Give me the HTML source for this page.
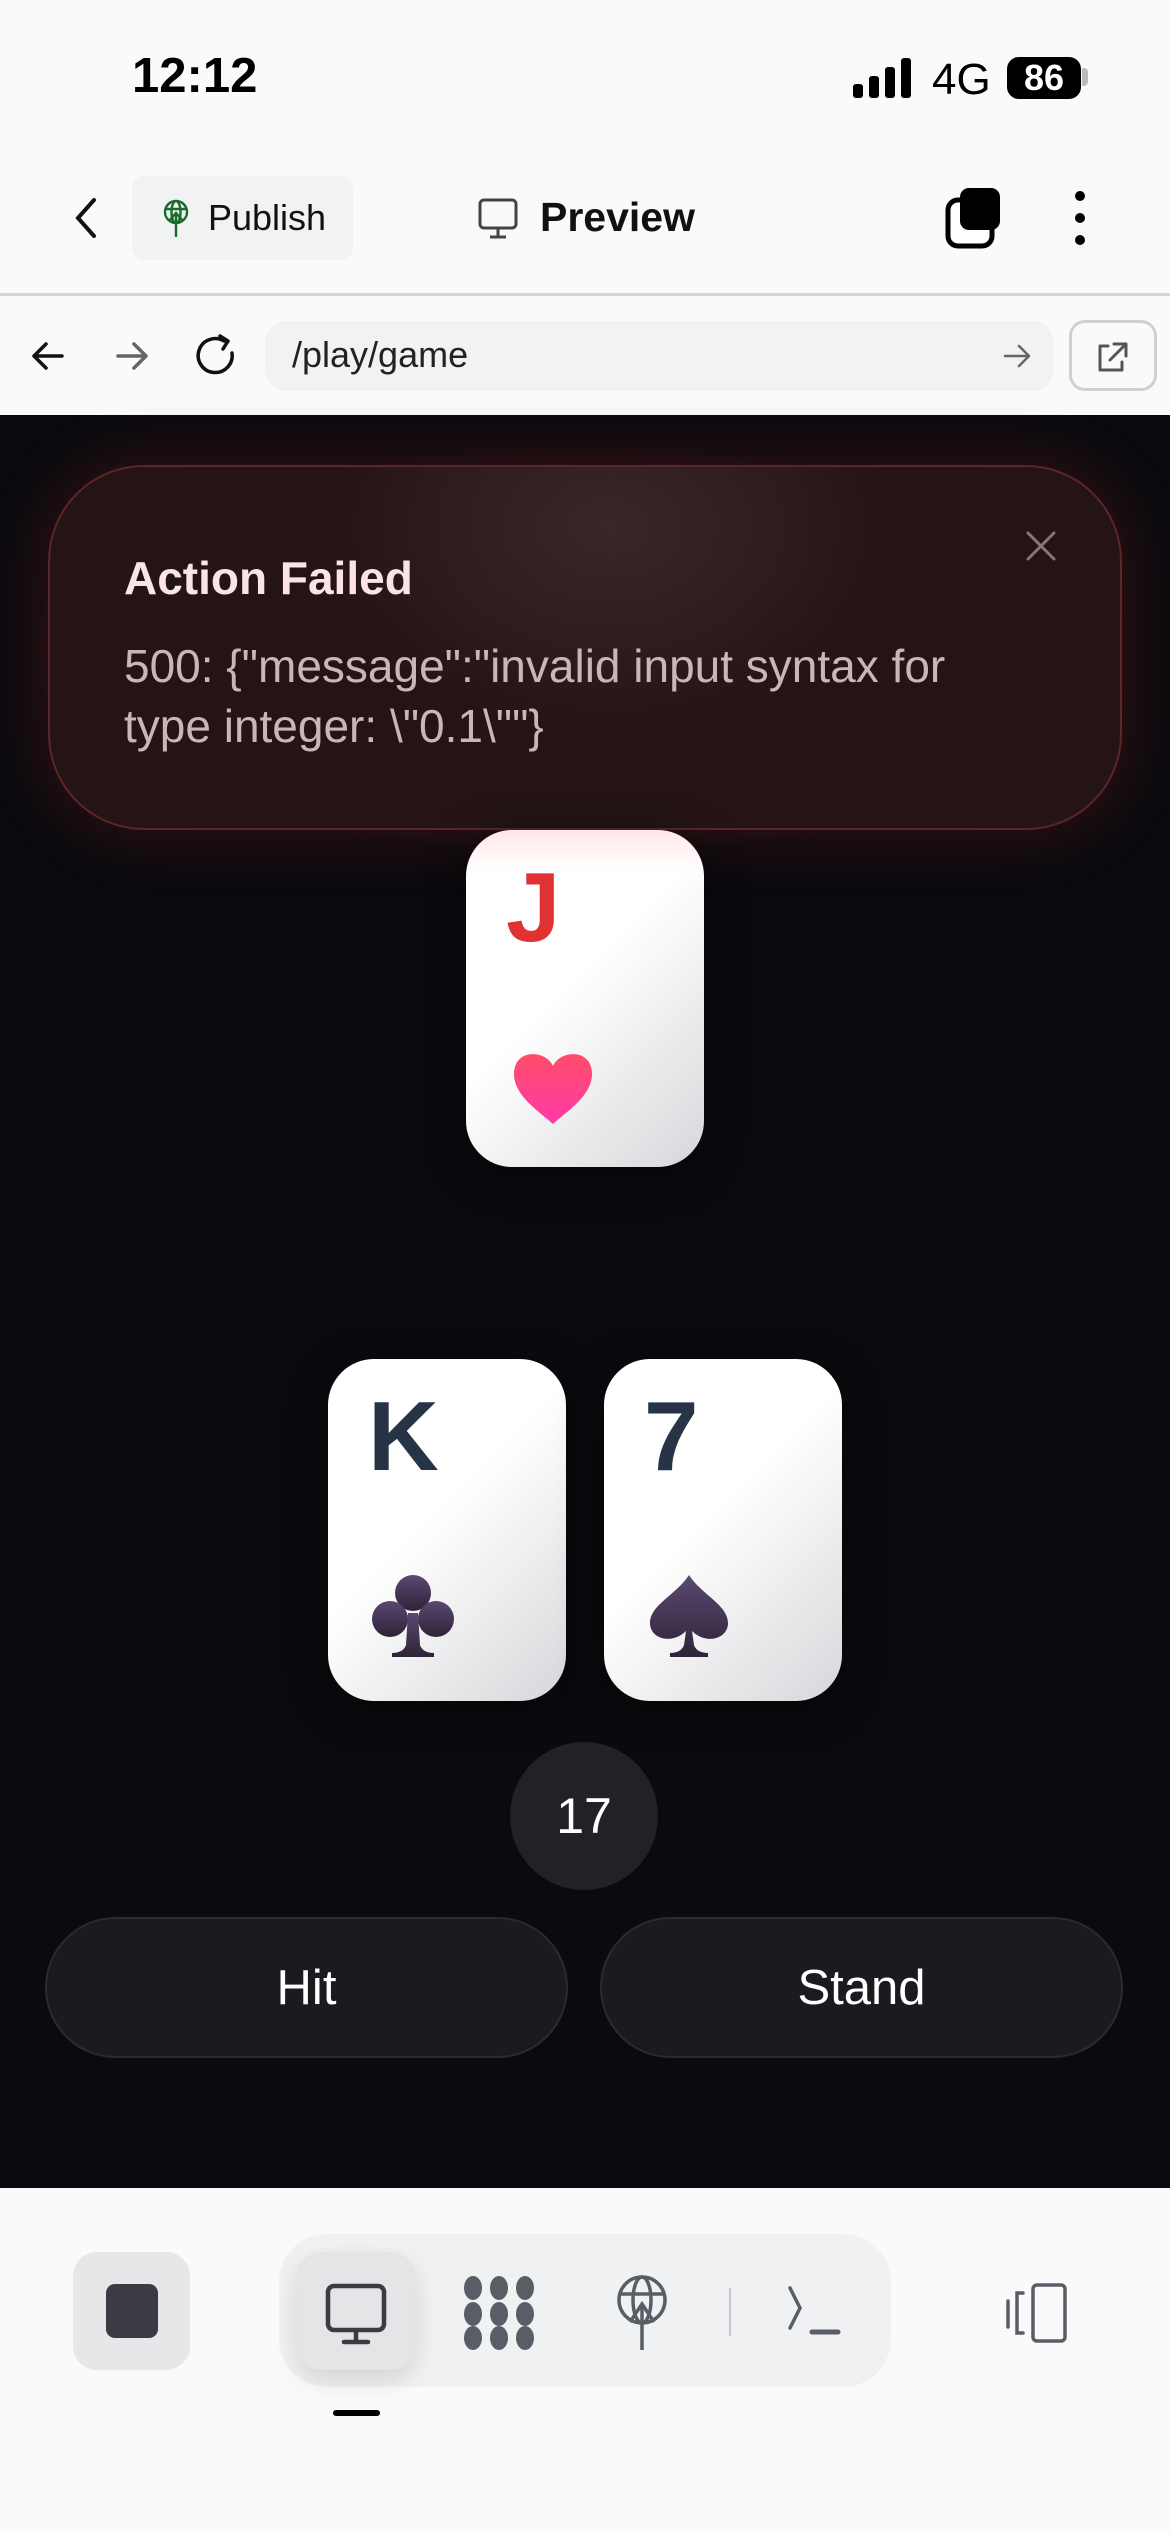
<!DOCTYPE html>
<html><head><meta charset="utf-8"><style>
*{margin:0;padding:0;box-sizing:border-box}
body{width:1170px;height:2532px;background:#fafafa;font-family:"Liberation Sans",sans-serif;position:relative;overflow:hidden}
.abs{position:absolute}
.dark{position:absolute;left:0;top:415px;width:1170px;height:1773px;background:#0b0b0f}
.card{position:absolute;width:238px;border-radius:46px;background:linear-gradient(135deg,#fff 0%,#fff 45%,#d6d7da 100%);box-shadow:0 10px 40px rgba(0,0,0,.5)}
.rank{position:absolute;left:40px;top:28px;font-weight:bold;font-size:98px;line-height:1}
.btn{position:absolute;top:1917px;height:141px;width:523px;border-radius:71px;background:#1b1b1f;border:2px solid #2a2a2f;color:#fff;font-size:49px;display:flex;align-items:center;justify-content:center}
</style></head><body>
<!-- status bar -->
<div class="abs" style="left:132px;top:48px;font-size:49px;font-weight:bold;color:#000">12:12</div>
<svg class="abs" style="left:853px;top:58px" width="62" height="40"><rect x="0" y="26" width="10" height="14" rx="3"/><rect x="16" y="18" width="10" height="22" rx="3"/><rect x="32" y="9" width="10" height="31" rx="3"/><rect x="48" y="0" width="10" height="40" rx="3"/></svg>
<div class="abs" style="left:932px;top:55px;font-size:44px;color:#000">4G</div>
<div class="abs" style="left:1007px;top:57px;width:74px;height:42px;background:#000;border-radius:12px;color:#fff;font-weight:bold;font-size:36px;text-align:center;line-height:42px">86</div>
<div class="abs" style="left:1082px;top:68px;width:6px;height:18px;background:#bbb;border-radius:0 4px 4px 0"></div>
<!-- toolbar -->
<svg class="abs" style="left:68px;top:196px" width="34" height="44"><path d="M26 4 L10 22 L26 40" fill="none" stroke="#111" stroke-width="4" stroke-linecap="round"/></svg>
<div class="abs" style="left:132px;top:176px;width:221px;height:84px;background:#f1f2f4;border-radius:12px"></div>
<svg class="abs" style="left:160px;top:198px" width="32" height="40" viewBox="0 0 32 40"><g fill="none" stroke="#1a6b2a" stroke-width="2.4"><circle cx="16" cy="14" r="11"/><ellipse cx="16" cy="14" rx="4.5" ry="11"/><line x1="5" y1="11" x2="27" y2="11"/><line x1="16" y1="14" x2="16" y2="39"/><path d="M9 23 L16 15 L23 23"/></g></svg>
<div class="abs" style="left:208px;top:197px;font-size:36px;color:#111">Publish</div>
<svg class="abs" style="left:478px;top:198px" width="40" height="42" viewBox="0 0 40 42"><g fill="none" stroke="#444" stroke-width="3"><rect x="2" y="2" width="36" height="28" rx="4"/><line x1="20" y1="30" x2="20" y2="38"/><line x1="12" y1="39" x2="28" y2="39"/></g></svg>
<div class="abs" style="left:540px;top:194px;font-size:41px;font-weight:bold;color:#111">Preview</div>
<svg class="abs" style="left:944px;top:186px" width="62" height="64" viewBox="0 0 62 64"><rect x="4" y="14" width="44" height="46" rx="10" fill="#fff" stroke="#000" stroke-width="5"/><rect x="16" y="2" width="40" height="42" rx="9" fill="#000"/></svg>
<svg class="abs" style="left:1070px;top:188px" width="20" height="60"><circle cx="10" cy="8" r="5"/><circle cx="10" cy="30" r="5"/><circle cx="10" cy="52" r="5"/></svg>
<div class="abs" style="left:0;top:293px;width:1170px;height:3px;background:#d4d5d8"></div>
<!-- url row -->
<svg class="abs" style="left:28px;top:336px" width="40" height="40"><path d="M34 20 H6 M18 8 L6 20 L18 32" fill="none" stroke="#111" stroke-width="3.5" stroke-linecap="round" stroke-linejoin="round"/></svg>
<svg class="abs" style="left:112px;top:336px" width="40" height="40"><path d="M6 20 H34 M22 8 L34 20 L22 32" fill="none" stroke="#666" stroke-width="3.5" stroke-linecap="round" stroke-linejoin="round"/></svg>
<svg class="abs" style="left:194px;top:333px" width="46" height="46" viewBox="0 0 46 46"><path d="M38 20 A17 17 0 1 1 30 8" fill="none" stroke="#111" stroke-width="3.5" stroke-linecap="round"/><path d="M26 3 L34 8 L29 16" fill="none" stroke="#111" stroke-width="3.5" stroke-linecap="round" stroke-linejoin="round"/></svg>
<div class="abs" style="left:265px;top:321px;width:789px;height:70px;background:#f1f2f4;border-radius:22px"></div>
<div class="abs" style="left:292px;top:334px;font-size:36px;color:#222">/play/game</div>
<svg class="abs" style="left:1002px;top:342px" width="30" height="28"><path d="M3 14 H27 M17 4 L27 14 L17 24" fill="none" stroke="#666" stroke-width="2.5" stroke-linecap="round" stroke-linejoin="round"/></svg>
<div class="abs" style="left:1069px;top:320px;width:88px;height:71px;border:3px solid #cfd0d3;border-radius:16px;background:#fafafa"></div>
<svg class="abs" style="left:1094px;top:340px" width="38" height="34" viewBox="0 0 38 34"><path d="M14 6 H6 V30 H28 V22 M20 4 H32 V16 M32 4 L16 20" fill="none" stroke="#555" stroke-width="3" stroke-linecap="round" stroke-linejoin="round"/></svg>
<!-- dark area -->
<div class="dark"></div>
<div class="abs" style="left:20px;top:440px;width:1130px;height:420px;border-radius:120px;background:radial-gradient(ellipse at 50% 50%,rgba(120,30,30,.35),rgba(60,10,10,0) 70%)"></div>
<div class="abs" style="left:48px;top:465px;width:1074px;height:365px;border-radius:96px;border:2px solid #5b2628;background:radial-gradient(ellipse 420px 300px at 560px 60px,#3b2628,#241416 70%);box-shadow:0 0 60px rgba(140,30,30,.35)"></div>
<div class="abs" style="left:124px;top:551px;font-size:46px;font-weight:bold;color:#fde4e4">Action Failed</div>
<div class="abs" style="left:124px;top:636px;font-size:46px;line-height:60px;color:#c9b7b8">500: {"message":"invalid input syntax for<br>type integer: \"0.1\""}</div>
<svg class="abs" style="left:1025px;top:530px" width="32" height="32"><path d="M3 3 L29 29 M29 3 L3 29" stroke="#8a7576" stroke-width="3" stroke-linecap="round"/></svg>
<!-- cards -->
<div class="card" style="left:466px;top:830px;height:337px;background:linear-gradient(180deg,#ffe8e8 0%,rgba(255,255,255,0) 12%),linear-gradient(135deg,#fff 0%,#fff 45%,#d6d7da 100%)">
<div class="rank" style="color:#e03232">J</div>
<svg class="abs" style="left:44px;top:218px" width="86" height="78" viewBox="0 0 86 78"><defs><linearGradient id="h" x1="0" y1="0" x2="0" y2="1"><stop offset="0" stop-color="#ff4d6a"/><stop offset="1" stop-color="#ff3aa8"/></linearGradient></defs><path d="M43 18 C36 2 4 0 4 26 C4 48 30 64 43 76 C56 64 82 48 82 26 C82 0 50 2 43 18Z" fill="url(#h)"/></svg>
</div>
<div class="card" style="left:328px;top:1359px;height:342px">
<div class="rank" style="color:#263446">K</div>
<svg class="abs" style="left:42px;top:214px" width="86" height="86" viewBox="0 0 86 86"><defs><linearGradient id="c" x1="0" y1="0" x2="0" y2="1"><stop offset="0" stop-color="#5a4872"/><stop offset="1" stop-color="#2e2438"/></linearGradient></defs><g fill="url(#c)"><circle cx="43" cy="20" r="18"/><circle cx="20" cy="46" r="18"/><circle cx="66" cy="46" r="18"/><path d="M38 40 H48 L50 72 C52 78 58 80 64 80 V84 H22 V80 C28 80 34 78 36 72Z"/></g></svg>
</div>
<div class="card" style="left:604px;top:1359px;height:342px">
<div class="rank" style="color:#263446">7</div>
<svg class="abs" style="left:42px;top:214px" width="86" height="86" viewBox="0 0 86 86"><defs><linearGradient id="s" x1="0" y1="0" x2="0" y2="1"><stop offset="0" stop-color="#5a4872"/><stop offset="1" stop-color="#2e2438"/></linearGradient></defs><g fill="url(#s)"><path d="M43 2 C30 22 4 32 4 50 C4 66 26 72 40 58 L38 72 C36 78 30 80 24 80 V84 H62 V80 C56 80 50 78 48 72 L46 58 C60 72 82 66 82 50 C82 32 56 22 43 2Z"/></g></svg>
</div>
<div class="abs" style="left:510px;top:1742px;width:148px;height:148px;border-radius:50%;background:#222226;color:#fff;font-size:50px;text-align:center;line-height:148px">17</div>
<div class="btn" style="left:45px">Hit</div>
<div class="btn" style="left:600px">Stand</div>
<!-- bottom bar -->
<div class="abs" style="left:73px;top:2252px;width:117px;height:118px;background:#e6e7e9;border-radius:24px"></div>
<div class="abs" style="left:106px;top:2284px;width:52px;height:54px;background:#3b3c43;border-radius:9px"></div>
<div class="abs" style="left:279px;top:2234px;width:612px;height:153px;background:#f0f1f3;border-radius:48px"></div>
<div class="abs" style="left:297px;top:2252px;width:118px;height:118px;background:#e4e5e7;border-radius:24px;box-shadow:0 10px 24px rgba(0,0,0,.12)"></div>
<svg class="abs" style="left:324px;top:2282px" width="64" height="64" viewBox="0 0 64 64"><g fill="none" stroke="#3b3c43" stroke-width="4.5"><rect x="4" y="4" width="56" height="44" rx="6"/><line x1="32" y1="48" x2="32" y2="58"/><line x1="20" y1="60" x2="44" y2="60" stroke-linecap="round"/></g></svg>
<svg class="abs" style="left:463px;top:2276px" width="74" height="74" viewBox="0 0 74 74"><g fill="#5a5d66"><ellipse cx="10" cy="12" rx="9" ry="12"/><ellipse cx="36" cy="12" rx="9" ry="12"/><ellipse cx="62" cy="12" rx="9" ry="12"/><ellipse cx="10" cy="38" rx="9" ry="12"/><ellipse cx="36" cy="38" rx="9" ry="12"/><ellipse cx="62" cy="38" rx="9" ry="12"/><ellipse cx="10" cy="62" rx="9" ry="12"/><ellipse cx="36" cy="62" rx="9" ry="12"/><ellipse cx="62" cy="62" rx="9" ry="12"/></g></svg>
<svg class="abs" style="left:614px;top:2274px" width="56" height="76" viewBox="0 0 56 76"><g fill="none" stroke="#5a5d66" stroke-width="3.5"><circle cx="28" cy="26" r="23"/><ellipse cx="28" cy="26" rx="9" ry="23"/><line x1="5" y1="20" x2="51" y2="20"/><line x1="28" y1="30" x2="28" y2="76"/><path d="M16 48 L28 30 L40 48"/></g></svg>
<div class="abs" style="left:729px;top:2288px;width:2px;height:48px;background:#c5c6c9"></div>
<svg class="abs" style="left:786px;top:2286px" width="56" height="52" viewBox="0 0 56 52"><g fill="none" stroke="#5a5d66" stroke-width="3.5" stroke-linecap="round"><path d="M4 2 L14 22 L4 42"/><line x1="26" y1="46" x2="52" y2="46" stroke-width="5"/></g></svg>
<svg class="abs" style="left:1005px;top:2283px" width="66" height="60" viewBox="0 0 66 60"><g fill="none" stroke="#5a5d66" stroke-width="3.5" stroke-linecap="round"><line x1="3" y1="18" x2="3" y2="44"/><path d="M18 10 H12 V50 H18"/><rect x="28" y="2" width="32" height="56" rx="4"/></g></svg>
<div class="abs" style="left:333px;top:2410px;width:47px;height:6px;background:#000;border-radius:3px"></div>
</body></html>
